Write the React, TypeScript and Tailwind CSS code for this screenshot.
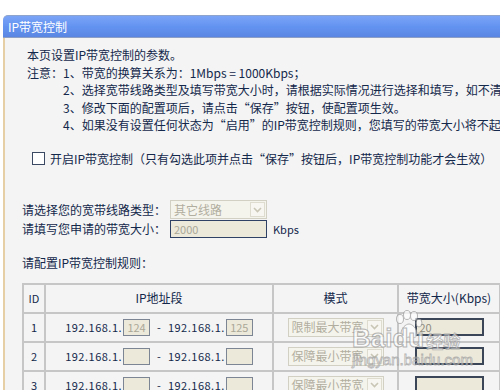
import React from 'react';

const textColor = 'text-[#13284b]';

const Chevron = ({ light }: { light?: boolean }) => (
  <svg width="9" height="6" viewBox="0 0 9 6" fill="none">
    <path d="M1 1l3.5 3.5L8 1" stroke={light ? '#c9c6b6' : '#4d6185'} strokeWidth="1.6" />
  </svg>
);

const DisabledSelect = ({ value, width }: { value: string; width: string }) => (
  <div className={`${width} h-[19px] flex items-center border border-[#d2d0c3] bg-[#f5f4ec]`}>
    <span className="flex-1 pl-[3px] text-[12px] leading-none text-[#b1ae9f] whitespace-nowrap overflow-hidden">{value}</span>
    <span className="w-[15px] h-[15px] mr-[1px] flex items-center justify-center border border-[#dedccf] bg-[#f7f6f0]">
      <Chevron light />
    </span>
  </div>
);

const IpBox = ({ value }: { value?: string }) => (
  <div className="w-[27px] h-[17px] border border-[#7b8594] bg-[#ece9db] flex items-center justify-center text-[11px] leading-none text-[#aaa797]">
    {value}
  </div>
);

interface Rule {
  id: number;
  from?: string;
  to?: string;
  mode: string;
  bw?: string;
}

const rules: Rule[] = [
  { id: 1, from: '124', to: '125', mode: '限制最大带宽', bw: '20' },
  { id: 2, mode: '保障最小带宽' },
  { id: 3, mode: '保障最小带宽' },
];

const cell = 'border-2 border-[#c6c6c6] p-0';

export default function App() {
  return (
    <div
      lang="zh-CN"
      className={`relative w-[500px] h-[390px] overflow-hidden bg-white font-['Noto_Sans_CJK_SC','Liberation_Sans',sans-serif] ${textColor}`}
    >
      <div className="pt-[15px] pl-[3px]">
        <div className="h-[23px] rounded-tl-[5px] border-t border-[#8fa4cc] bg-gradient-to-b from-[#7ba4f6] via-[#6393f1] to-[#5a86e2] border-b border-b-[#8d9fc4] flex items-center pl-[5px] text-[12px] text-white whitespace-nowrap">
          IP带宽控制
        </div>

        <div className="h-[352px] bg-[#f4f4f4] border-l-2 border-[#e6cfa4] pl-[17px] pt-[8px] text-[12px]">
          {/* notes */}
          <div className="ml-[5px] leading-[17.5px] whitespace-nowrap">
            <div>本页设置IP带宽控制的参数。</div>
            <div className="flex">
              <span className="w-[36px] shrink-0">注意：</span>
              <span>1、带宽的换算关系为：1Mbps = 1000Kbps；</span>
            </div>
            <div className="pl-[36px]">2、选择宽带线路类型及填写带宽大小时，请根据实际情况进行选择和填写，如不清楚，请咨询您的带宽提供商。</div>
            <div className="pl-[36px]">3、修改下面的配置项后，请点击“保存”按钮，使配置项生效。</div>
            <div className="pl-[36px]">4、如果没有设置任何状态为“启用”的IP带宽控制规则，您填写的带宽大小将不起作用。</div>
          </div>

          {/* enable checkbox */}
          <div className="mt-[17px] ml-[10px] h-[16px] flex items-center gap-[5px] whitespace-nowrap">
            <span className="w-[13px] h-[13px] border border-[#3b4a62] bg-white shrink-0" />
            <span className="leading-none">开启IP带宽控制（只有勾选此项并点击“保存”按钮后，IP带宽控制功能才会生效）</span>
          </div>

          {/* line settings */}
          <div className="mt-[33px] flex flex-col">
            <div className="h-[20px] flex items-center whitespace-nowrap">
              <span className="w-[148px] shrink-0">请选择您的宽带线路类型：</span>
              <DisabledSelect value="其它线路" width="w-[97px]" />
            </div>
            <div className="h-[19px] flex items-center whitespace-nowrap">
              <span className="w-[148px] shrink-0">请填写您申请的带宽大小：</span>
              <div className="w-[97px] h-[18px] border border-[#2f4266] bg-[#ece9db] flex items-center pl-[3px] text-[11px] leading-none text-[#aaa797]">
                2000
              </div>
              <span className="ml-[6px] text-[11px]">Kbps</span>
            </div>
          </div>

          <div className="mt-[15px] leading-[18px] whitespace-nowrap">请配置IP带宽控制规则：</div>

          {/* rules table */}
          <table className="mt-[11px] w-[477px] border-collapse table-fixed">
            <colgroup>
              <col className="w-[22px]" />
              <col className="w-[228px]" />
              <col className="w-[125px]" />
              <col className="w-[102px]" />
            </colgroup>
            <thead>
              <tr className="h-[29px]">
                <th className={`${cell} font-normal text-[11px]`}>ID</th>
                <th className={`${cell} font-normal`}>IP地址段</th>
                <th className={`${cell} font-normal`}>模式</th>
                <th className={`${cell} font-normal whitespace-nowrap text-[12px]`}>带宽大小(Kbps)</th>
              </tr>
            </thead>
            <tbody>
              {rules.map((r) => (
                <tr key={r.id} className="h-[29px]">
                  <td className={`${cell} text-center text-[11px]`}>{r.id}</td>
                  <td className={cell}>
                    <div className="flex items-center justify-center whitespace-nowrap text-[11px]">
                      <span className="mr-[1px] tracking-[0.5px]">192.168.1.</span>
                      <IpBox value={r.from} />
                      <span className="mx-[7px]">-</span>
                      <span className="mr-[1px] tracking-[0.5px]">192.168.1.</span>
                      <IpBox value={r.to} />
                    </div>
                  </td>
                  <td className={cell}>
                    <div className="flex justify-center">
                      <DisabledSelect value={r.mode} width="w-[96px]" />
                    </div>
                  </td>
                  <td className={cell}>
                    <div className="flex justify-center">
                      <div className="w-[69px] h-[18px] border-2 border-[#3b4658] bg-[#ece9db] flex items-center pl-[3px] text-[11px] leading-none text-[#8f8c7e]">
                        {r.bw}
                      </div>
                    </div>
                  </td>
                </tr>
              ))}
            </tbody>
          </table>
        </div>
      </div>

      {/* watermark */}
      <div className="absolute left-[352px] top-[308px] pointer-events-none select-none opacity-70">
        <svg className="absolute left-[40px] top-[2px]" width="32" height="30" viewBox="0 0 32 30">
          <g fill="white" stroke="#9a9a9a" strokeWidth="1">
            <ellipse cx="8" cy="9" rx="3.5" ry="4.5" />
            <ellipse cx="15" cy="5" rx="3.5" ry="4.5" />
            <ellipse cx="22" cy="6" rx="3.5" ry="4.5" />
            <ellipse cx="27" cy="13" rx="3" ry="4" />
            <path d="M9 24c0-6 5-10 8-10s8 4 8 10c0 4-4 4-8 3-4 1-8 1-8-3z" />
          </g>
        </svg>
        <div className="relative pt-[17px] flex items-end whitespace-nowrap">
          <span className="font-['Liberation_Sans',sans-serif] font-bold text-[26px] leading-none text-white [-webkit-text-stroke:1px_#9a9a9a]">Baidu</span>
          <span className="ml-[2px] mb-[2px] font-['Noto_Sans_CJK_SC',sans-serif] font-bold text-[17px] leading-none text-white [-webkit-text-stroke:0.8px_#9a9a9a]">经验</span>
        </div>
        <div className="mt-[1px] font-['Liberation_Sans',sans-serif] text-[15px] leading-none text-white [-webkit-text-stroke:0.8px_#9a9a9a] whitespace-nowrap">
          jingyan.baidu.com
        </div>
      </div>
    </div>
  );
}
